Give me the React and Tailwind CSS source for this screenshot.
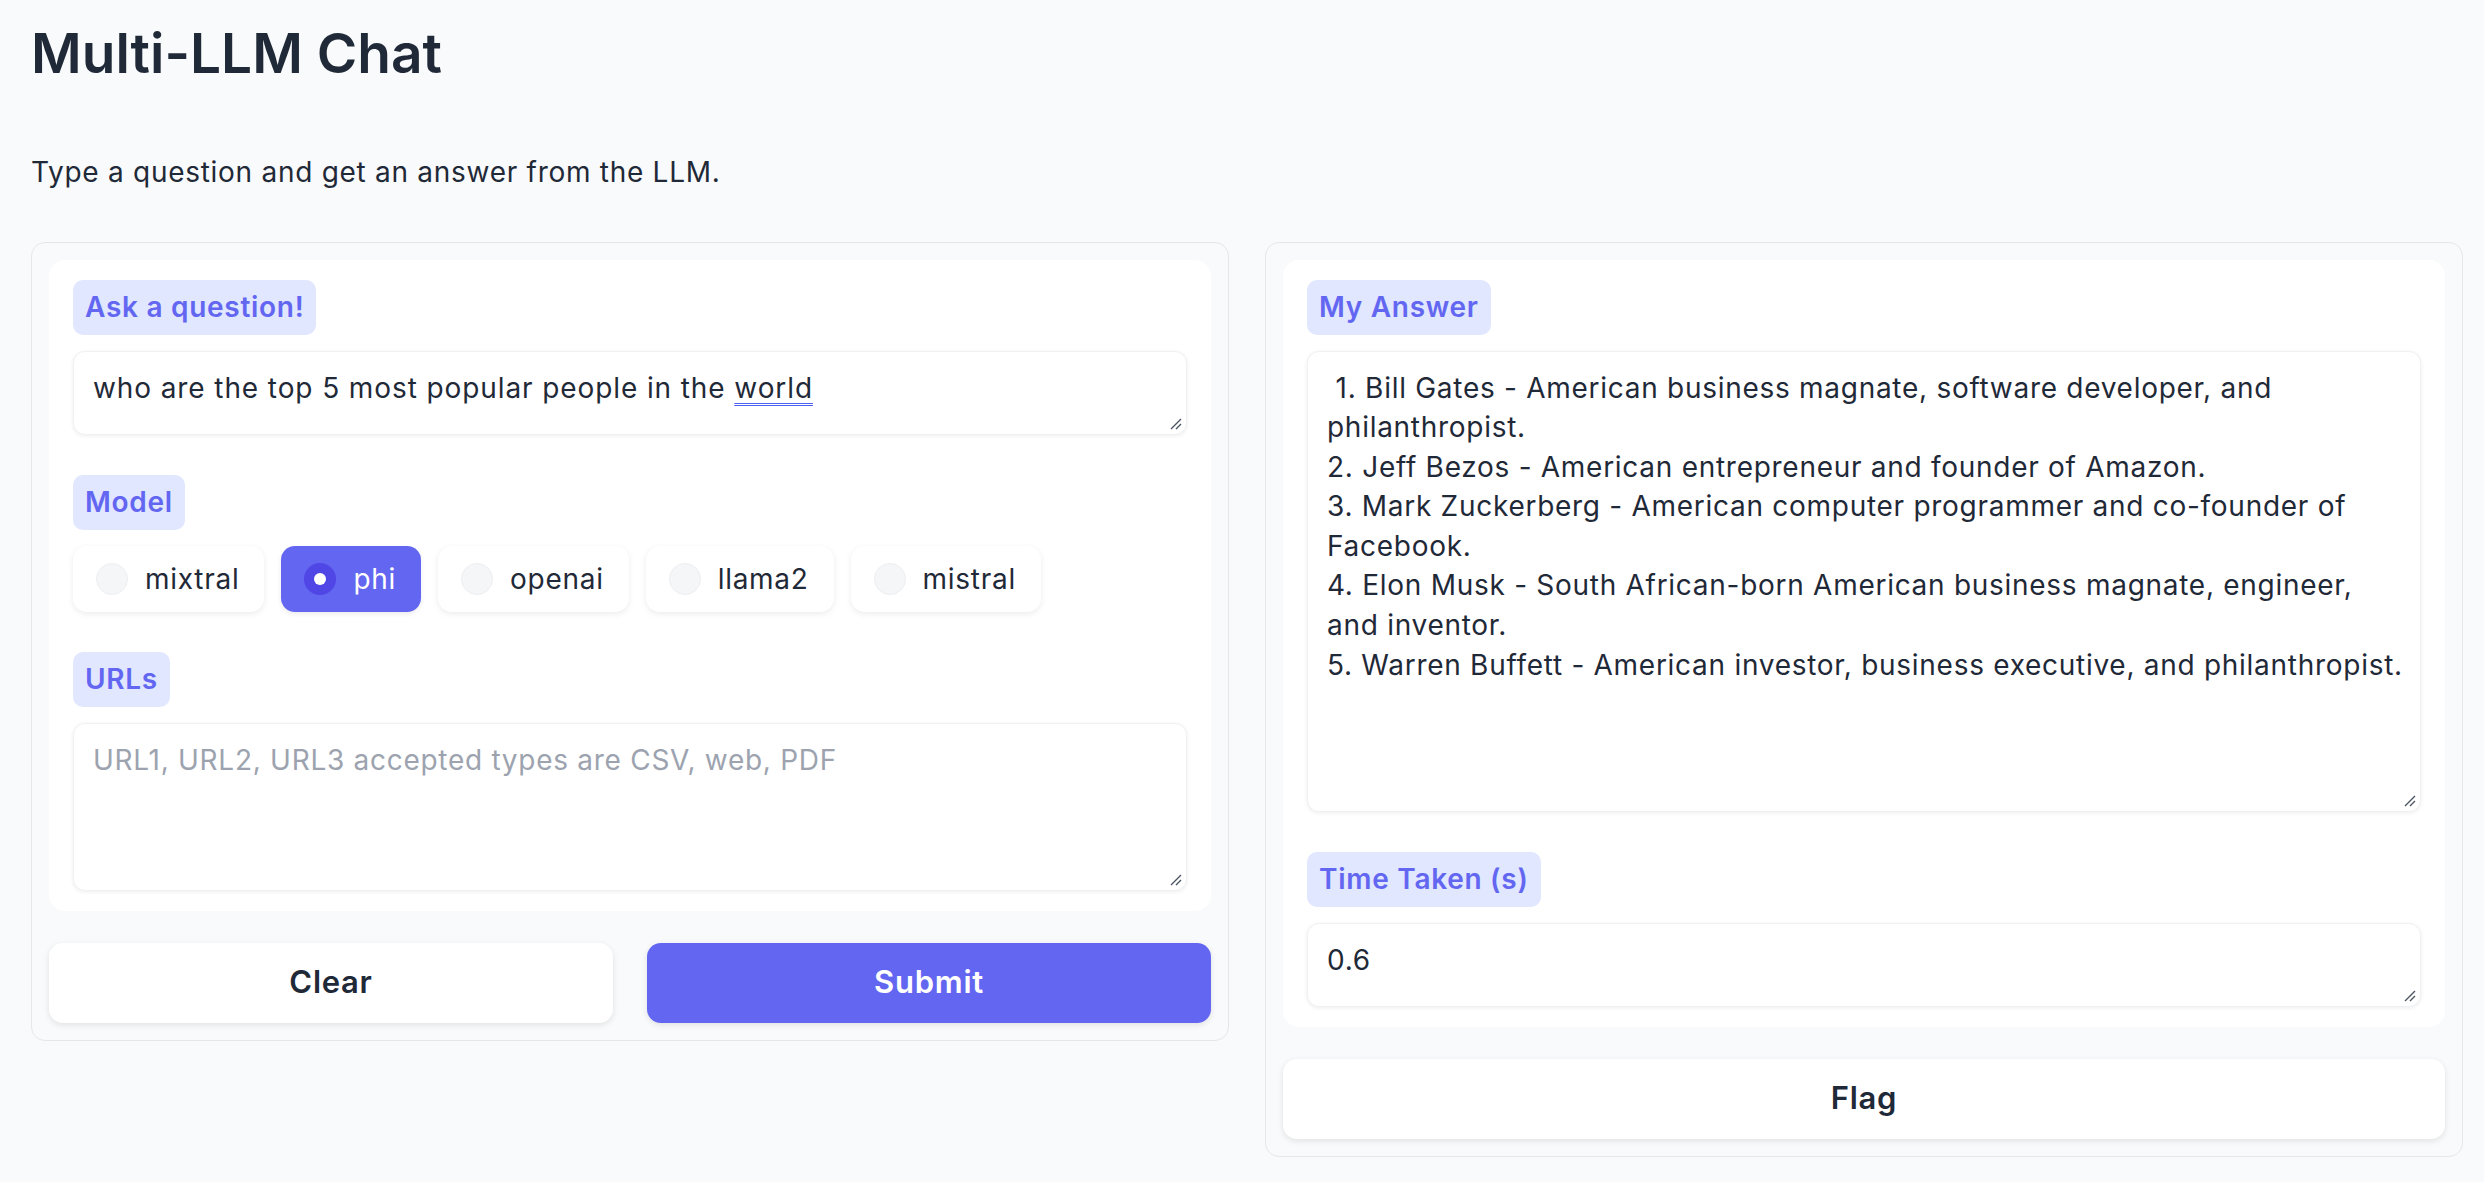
import React from 'react';

const Grip = () => (
  <svg className="absolute bottom-[4px] right-[4px]" width="14" height="14" viewBox="0 0 14 14">
    <path d="M13 3 L3 13 M13 8 L8 13" stroke="#4b5563" strokeWidth="1.4" />
  </svg>
);

const Label = ({ children }) => (
  <span className="inline-flex h-[55px] items-center self-start rounded-[10px] bg-[#e0e7ff] px-[12px] text-[28px] font-semibold text-[#6366f1]">
    {children}
  </span>
);

const Field = ({ className = '', children }) => (
  <div
    className={`relative mt-[16px] rounded-[12px] border border-[#f0f1f3] bg-white pl-[19px] pt-[17px] text-[28px] leading-[39.6px] text-[#1f2937] shadow-[0_1px_4px_rgba(0,0,0,0.07)] ${className}`}
  >
    {children}
    <Grip />
  </div>
);

const models = ['mixtral', 'phi', 'openai', 'llama2', 'mistral'];

const answer = [
  '\u00a01. Bill Gates - American business magnate, software developer, and philanthropist.',
  '2. Jeff Bezos - American entrepreneur and founder of Amazon.',
  '3. Mark Zuckerberg - American computer programmer and co-founder of Facebook.',
  '4. Elon Musk - South African-born American business magnate, engineer, and inventor.',
  '5. Warren Buffett - American investor, business executive, and philanthropist.',
];

export default function App() {
  return (
    <div className="min-h-screen bg-[#f9fafb] pl-[31px] pr-[21px] font-['Inter',sans-serif] text-[#1f2937] tracking-[0.72px]">
      <h1 className="pt-[20px] text-[55px] leading-[1.23] font-semibold tracking-normal">Multi-LLM Chat</h1>
      <p className="mt-[68px] text-[28px] leading-[1.21]">Type a question and get an answer from the LLM.</p>

      <div className="mt-[52px] grid grid-cols-2 items-start gap-[36px]">
        {/* left column */}
        <div className="rounded-[14px] border border-[#e5e7eb] bg-[#f9fafb] p-[17px]">
          <div className="flex flex-col rounded-[16px] bg-white px-[24px] py-[20px]">
            <Label>Ask a question!</Label>
            <Field className="h-[84px] pr-[19px] tracking-[0.9px]">
              who are the top 5 most popular people in the{' '}
              <span className="underline decoration-double decoration-[#4c5ff0] decoration-[1px] underline-offset-[5px]">world</span>
            </Field>

            <div className="mt-[40px] flex flex-col">
              <Label>Model</Label>
              <div className="mt-[16px] flex gap-[17px]">
                {models.map((m) =>
                  m === 'phi' ? (
                    <div
                      key={m}
                      className="flex h-[66px] items-center gap-[17px] rounded-[14px] bg-[#6366f1] pl-[23px] pr-[25px] text-[28px] text-white shadow-[0_2px_5px_rgba(0,0,0,0.08)]"
                    >
                      <span className="flex h-[32px] w-[32px] items-center justify-center rounded-full bg-[#4f46e5]">
                        <span className="h-[12px] w-[12px] rounded-full bg-white" />
                      </span>
                      {m}
                    </div>
                  ) : (
                    <div
                      key={m}
                      className="flex h-[66px] items-center gap-[17px] rounded-[14px] bg-white pl-[23px] pr-[25px] text-[28px] shadow-[0_2px_6px_rgba(0,0,0,0.08)]"
                    >
                      <span className="h-[32px] w-[32px] rounded-full border border-[#eceef1] bg-[#f5f6f8]" />
                      {m}
                    </div>
                  )
                )}
              </div>
            </div>

            <div className="mt-[40px] flex flex-col">
              <Label>URLs</Label>
              <Field className="h-[168px] pr-[19px]">
                <span className="text-[#9ca3af]">URL1, URL2, URL3 accepted types are CSV, web, PDF</span>
              </Field>
            </div>
          </div>

          <div className="mt-[32px] grid grid-cols-2 gap-[34px]">
            <button className="h-[80px] rounded-[14px] bg-white text-[31px] font-semibold text-[#1f2937] shadow-[0_2px_6px_rgba(0,0,0,0.1)]">
              Clear
            </button>
            <button className="h-[80px] rounded-[14px] bg-[#6366f1] text-[31px] font-semibold text-white shadow-[0_2px_6px_rgba(0,0,0,0.1)]">
              Submit
            </button>
          </div>
        </div>

        {/* right column */}
        <div className="rounded-[14px] border border-[#e5e7eb] bg-[#f9fafb] p-[17px]">
          <div className="flex flex-col rounded-[16px] bg-white px-[24px] py-[20px]">
            <Label>My Answer</Label>
            <Field className="h-[461px] pr-[14px]">
              {answer.map((line, i) => (
                <div key={i}>{line}</div>
              ))}
            </Field>

            <div className="mt-[40px] flex flex-col">
              <Label>Time Taken (s)</Label>
              <Field className="h-[84px] pr-[19px]">0.6</Field>
            </div>
          </div>

          <button className="mt-[32px] h-[80px] w-full rounded-[14px] bg-white text-[31px] font-semibold text-[#1f2937] shadow-[0_2px_6px_rgba(0,0,0,0.1)]">
            Flag
          </button>
        </div>
      </div>
    </div>
  );
}
